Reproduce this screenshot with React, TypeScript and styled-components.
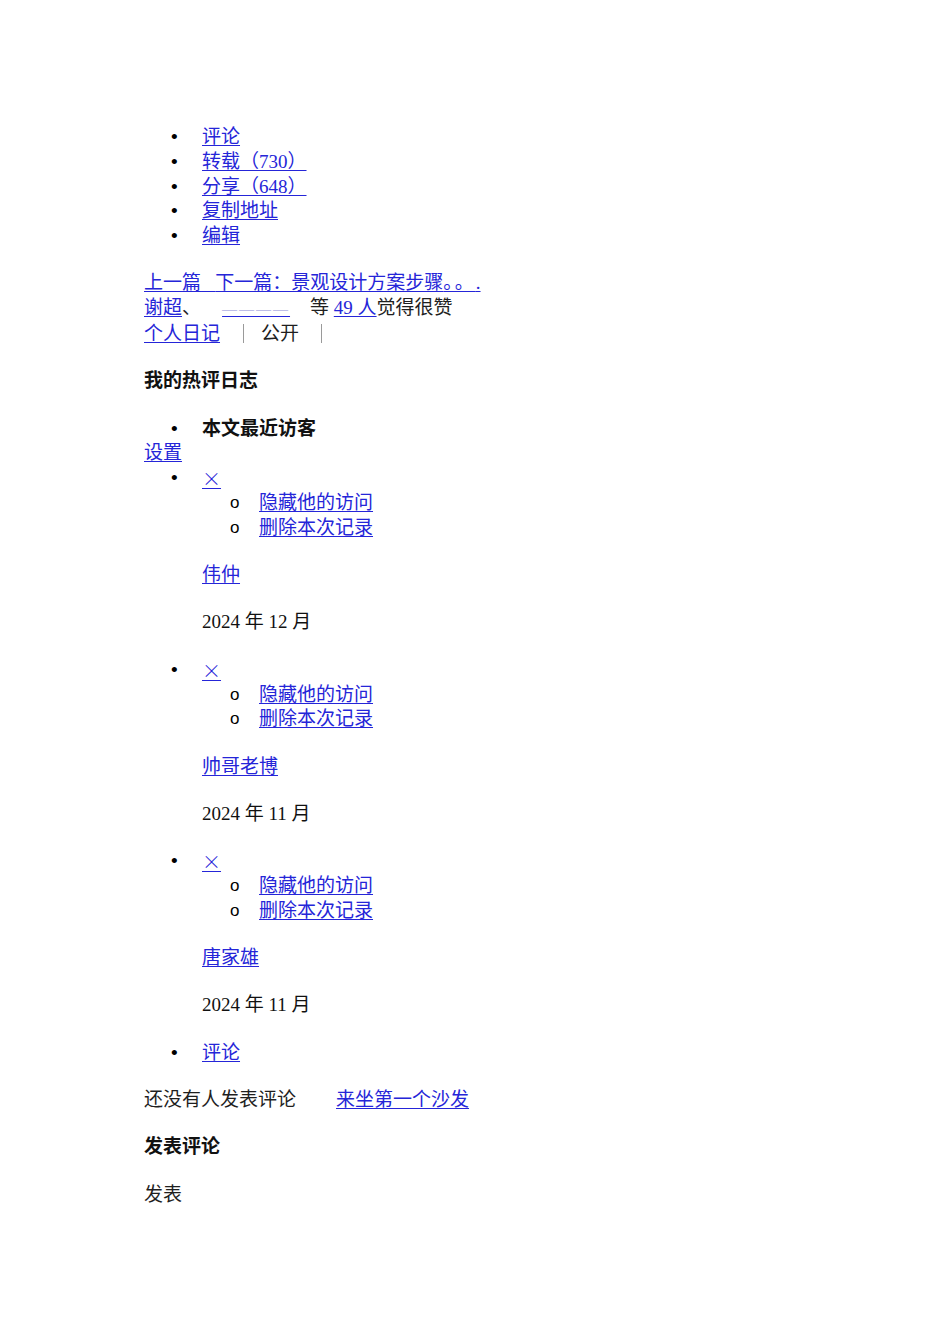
import React from "react";
import styled, { createGlobalStyle } from "styled-components";

const GlobalStyle = createGlobalStyle`
  html, body {
    margin: 0;
    padding: 0;
    background: #ffffff;
  }
  body {
    font-family: "Liberation Serif", "Noto Sans CJK SC", serif;
    font-size: 19px;
    line-height: 24.8px;
    color: #1f1f1f;
  }
`;

const Page = styled.div`
  width: 950px;
  min-height: 1344px;
  box-sizing: border-box;
  padding: 125px 0 0 144px;
`;

const Link = styled.a<{ $light?: boolean }>`
  color: ${(p) => (p.$light ? "#8a8ad6" : "#2525d8")};
  text-decoration: underline;
  text-decoration-color: #2525d8;
  text-underline-offset: 2px;
  cursor: pointer;
`;

const Cross = styled(Link)`
  display: inline-block;
  height: 24.8px;
  line-height: 24.8px;
  vertical-align: top;
  font-family: "Noto Sans CJK SC", sans-serif;
  font-weight: 300;
`;

const List = styled.ul<{ $indent?: number; $gap?: boolean }>`
  list-style: none;
  margin: ${(p) => (p.$gap ? "0 0 22.5px" : "0")};
  padding: 0 0 0 ${(p) => p.$indent ?? 58}px;
`;

const Item = styled.li<{ $bold?: boolean; $spaced?: boolean }>`
  position: relative;
  font-family: ${(p) =>
    p.$bold
      ? `"Liberation Sans", "Noto Sans CJK SC", sans-serif`
      : `"Liberation Serif", "Noto Sans CJK SC", serif`};
  font-weight: ${(p) => (p.$bold ? 700 : 400)};
  color: #111;
  margin-top: ${(p) => (p.$spaced ? "22.5px" : "0")};

  &::before {
    content: "•";
    position: absolute;
    left: -31px;
    top: 0;
    font-family: "Liberation Sans", sans-serif;
    font-weight: 400;
    color: #000;
  }
`;

const SubItem = styled.li`
  position: relative;

  &::before {
    content: "o";
    position: absolute;
    left: -29px;
    top: 0;
    font-family: "Liberation Sans", sans-serif;
    font-size: 17px;
    color: #000;
  }
`;

const Block = styled.div`
  margin: 0 0 22.5px;
`;

const Line = styled.div`
  white-space: nowrap;
`;

const Para = styled.p`
  margin: 22.5px 0 0;
  white-space: nowrap;
`;

const Heading = styled.h4<{ $flush?: boolean }>`
  margin: ${(p) => (p.$flush ? "0" : "0 0 22.5px")};
  font-family: "Liberation Sans", "Noto Sans CJK SC", sans-serif;
  font-size: 19px;
  font-weight: 700;
  line-height: 24.8px;
  color: #111;
`;

const Gap = styled.span<{ $w: number }>`
  display: inline-block;
  width: ${(p) => p.$w}px;
`;

const Bar = styled.span<{ $l: number; $r: number }>`
  display: inline-block;
  width: 0;
  height: 19px;
  border-left: 1px solid #9a9a9a;
  vertical-align: -3px;
  margin: 0 ${(p) => p.$r}px 0 ${(p) => p.$l}px;
`;

const Dashes = styled(Link)`
  font-size: 15px;
  letter-spacing: 2px;
`;

const Trail = styled.span`
  letter-spacing: 2px;
`;

const visitors = [
  { name: "伟仲", date: "2024 年 12 月" },
  { name: "帅哥老博", date: "2024 年 11 月" },
  { name: "唐家雄", date: "2024 年 11 月" },
];

export default function App() {
  return (
    <>
      <GlobalStyle />
      <Page>
        <List $gap>
          <Item><Link>评论</Link></Item>
          <Item><Link>转载（730）</Link></Item>
          <Item><Link>分享（648）</Link></Item>
          <Item><Link>复制地址</Link></Item>
          <Item><Link>编辑</Link></Item>
        </List>

        <Block>
          <Line>
            <Link>
              上一篇{"\u00a0\u00a0\u00a0"}下一篇：景观设计方案步骤<Trail>。。</Trail>.
            </Link>
          </Line>
          <Line>
            <Link>谢超</Link>、<Gap $w={21} />
            <Dashes $light>————</Dashes>
            <Gap $w={20} />等 <Link>49 人</Link>觉得很赞
          </Line>
          <Line>
            <Link>个人日记</Link>
            <Bar $l={23} $r={17} />
            公开
            <Bar $l={22} $r={0} />
          </Line>
        </Block>

        <Heading>我的热评日志</Heading>

        <List>
          <Item $bold>本文最近访客</Item>
        </List>
        <Line>
          <Link>设置</Link>
        </Line>

        <List>
          {visitors.map((v, i) => (
            <Item key={v.name} $spaced={i > 0}>
              <Cross>×</Cross>
              <List $indent={57}>
                <SubItem><Link>隐藏他的访问</Link></SubItem>
                <SubItem><Link>删除本次记录</Link></SubItem>
              </List>
              <Para><Link>{v.name}</Link></Para>
              <Para>{v.date}</Para>
            </Item>
          ))}
          <Item $spaced><Link>评论</Link></Item>
        </List>

        <Para>
          还没有人发表评论<Gap $w={40} /><Link>来坐第一个沙发</Link>
        </Para>
        <Para as="div">
          <Heading as="div" $flush>发表评论</Heading>
        </Para>
        <Para>发表</Para>
      </Page>
    </>
  );
}
